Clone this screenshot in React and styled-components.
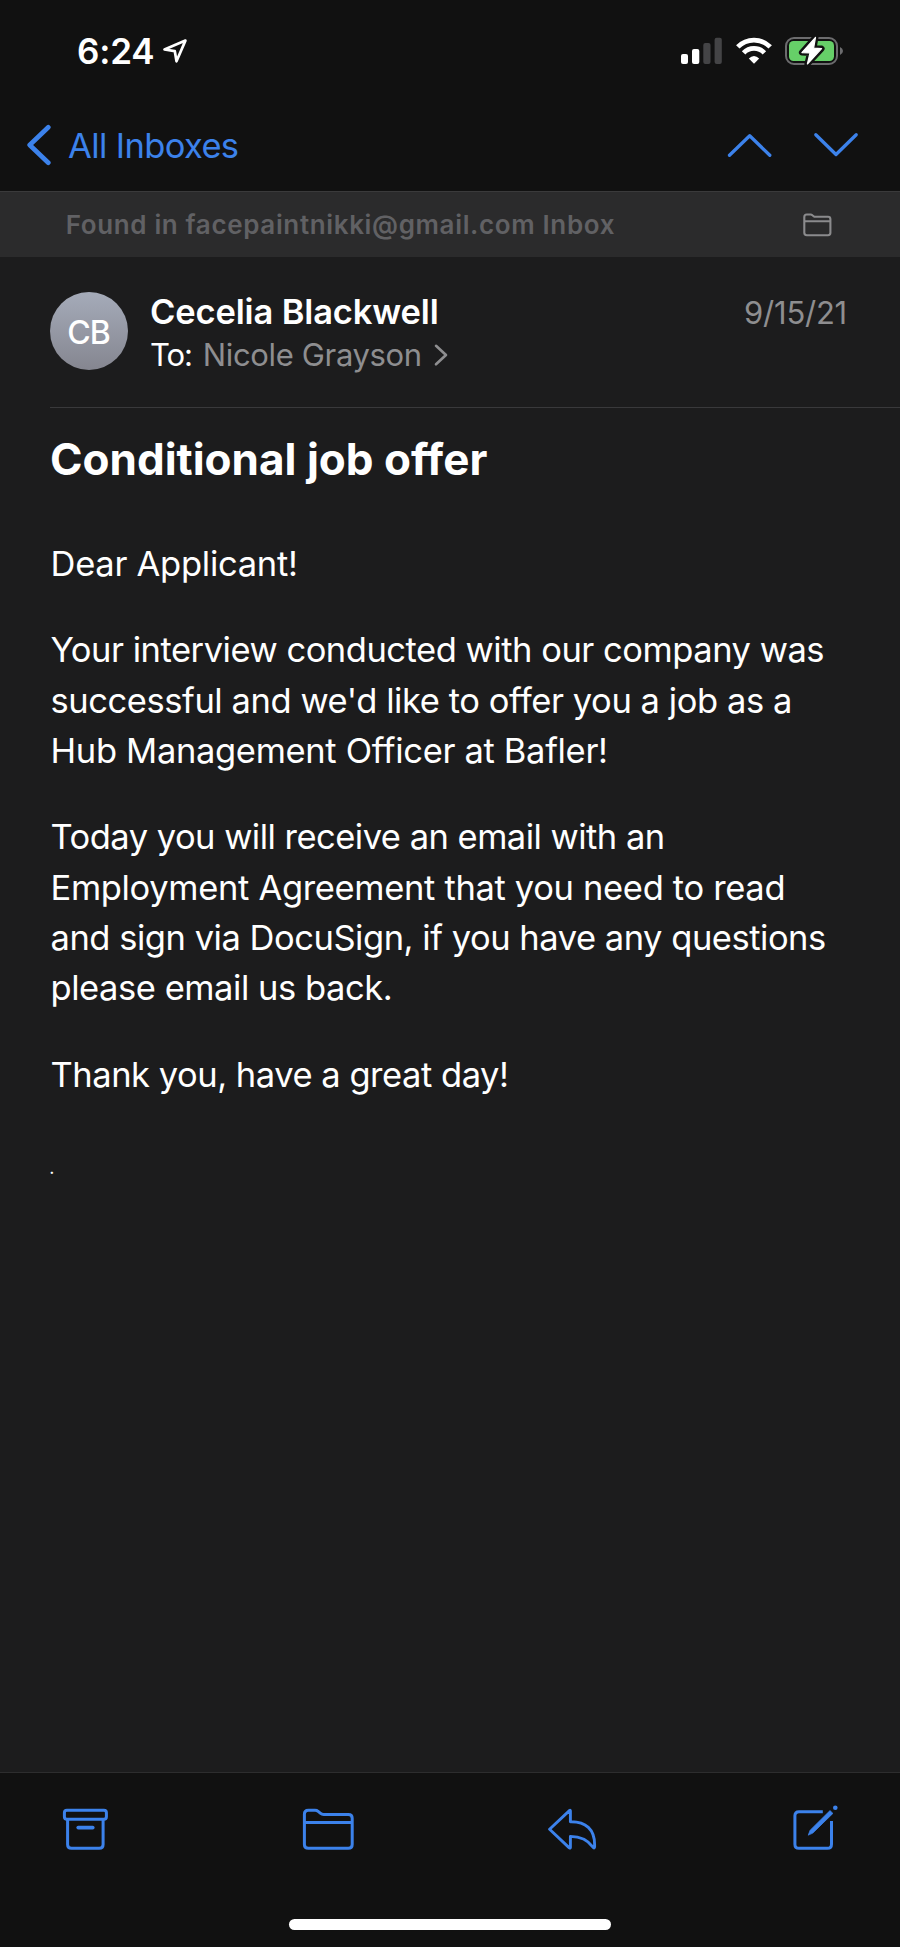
import React from "react";
import styled, { createGlobalStyle } from "styled-components";

const BLUE = "#3c82eb";
const CHROME = "#111111";

const GlobalStyle = createGlobalStyle`
  *, *::before, *::after { box-sizing: border-box; }
  body {
    margin: 0;
    background: ${CHROME};
    color: #fff;
    font-family: Inter, "Liberation Sans", sans-serif;
  }
  h1, p { margin: 0; }
`;

const Screen = styled.div`
  display: flex;
  flex-direction: column;
  width: 900px;
  height: 1947px;
  background: #1c1c1d;
  overflow: hidden;
`;

const Icon = styled.svg`
  display: block;
  flex: none;
  fill: none;
  stroke: currentColor;
  stroke-width: ${(p) => p.$weight || 3};
  stroke-linecap: round;
  stroke-linejoin: round;
`;

/* Status bar */
const StatusBar = styled.header`
  display: flex;
  align-items: center;
  height: 102px;
  padding: 0 55px 0 77px;
  background: ${CHROME};
`;

const Clock = styled.span`
  font-size: 35px;
  font-weight: 600;
  line-height: 42px;
  letter-spacing: -0.2px;
  margin-right: 7.7px;
`;

const StatusIcons = styled.div`
  display: flex;
  align-items: center;
  gap: 13px;
  margin-left: auto;
`;

/* Navigation */
const NavBar = styled.nav`
  display: flex;
  align-items: center;
  justify-content: space-between;
  height: 89px;
  padding: 0 41px 3px 25px;
  background: ${CHROME};
  color: ${BLUE};
`;

const PlainButton = styled.button`
  display: flex;
  align-items: center;
  padding: 0;
  border: 0;
  background: none;
  color: inherit;
  font: inherit;
`;

const BackButton = styled(PlainButton)`
  gap: 16px;
  font-size: 34.5px;
  line-height: 42px;
  letter-spacing: -0.62px;
`;

const BackLabel = styled.span`
  padding-top: 1px;
`;

const MessageArrows = styled.div`
  display: flex;
  gap: 40px;
`;

const FoundBanner = styled.div`
  display: flex;
  align-items: center;
  justify-content: space-between;
  height: 66px;
  padding: 0 67px 0 65.7px;
  border-top: 1px solid #3a3a3b;
  background: #2b2b2c;
  color: #8b8b8d;
`;

const FoundText = styled.span`
  color: #616164;
  font-size: 26px;
  font-weight: 600;
  line-height: 32px;
  letter-spacing: 0.64px;
`;

/* Message */
const Message = styled.main`
  flex: 1;
  padding-left: 50px;
`;

const SenderHeader = styled.section`
  display: flex;
  align-items: flex-start;
  height: 151px;
  padding: 32px 53px 0 0;
  border-bottom: 1px solid #39393b;
`;

const Avatar = styled.div`
  display: flex;
  align-items: center;
  justify-content: center;
  width: 78px;
  height: 78px;
  margin: 3px 22px 0 0;
  padding: 2px 1px 0 0;
  border-radius: 50%;
  background: linear-gradient(#a5abb9, #858690);
  font-size: 32px;
  font-weight: 500;
  letter-spacing: -1px;
`;

const SenderName = styled.div`
  padding-top: 1px;
  font-size: 34.5px;
  font-weight: 600;
  line-height: 43px;
  letter-spacing: -0.15px;
`;

const Recipient = styled.div`
  display: flex;
  align-items: center;
  color: #8e8e90;
  font-size: 31px;
  line-height: 43px;
  letter-spacing: -0.35px;
`;

const ToLabel = styled.span`
  margin-right: 11px;
  color: #fff;
  letter-spacing: -1.1px;
`;

const RecipientName = styled.span`
  margin-right: 11.5px;
`;

const MessageDate = styled.time`
  margin-left: auto;
  color: #8e8e90;
  font-size: 31px;
  line-height: 48px;
  letter-spacing: -0.23px;
`;

const Subject = styled.h1`
  padding-top: 24px;
  font-size: 44px;
  font-weight: 700;
  line-height: 54px;
`;

const Body = styled.article`
  display: flex;
  flex-direction: column;
  gap: 36px;
  padding-top: 53px;
  padding-left: 0.5px;
  font-size: 34.5px;
  line-height: 50.33px;
  white-space: nowrap;
`;

const Line = styled.span`
  display: block;
  letter-spacing: ${(p) => p.$tracking}px;
`;

const Footnote = styled.p`
  padding-top: 22px;
  margin-left: -1.3px;
  font-size: 18px;
  line-height: 20px;
`;

/* Bottom toolbar */
const Toolbar = styled.footer`
  display: flex;
  flex-direction: column;
  justify-content: space-between;
  align-items: center;
  height: 175px;
  padding-bottom: 17px;
  border-top: 1px solid #2d2d2e;
  background: ${CHROME};
  color: ${BLUE};
`;

const Actions = styled.div`
  display: flex;
  justify-content: space-between;
  width: 100%;
  padding: 31px 61px 0 62px;
`;

const HomeIndicator = styled.div`
  width: 322px;
  height: 11px;
  border-radius: 6px;
  background: #fff;
`;

const PARAGRAPHS = [
  [["Dear Applicant!", -0.27]],
  [
    ["Your interview conducted with our company was", -0.475],
    ["successful and we'd like to offer you a job as a", -0.43],
    ["Hub Management Officer at Bafler!", -0.33],
  ],
  [
    ["Today you will receive an email with an", -0.52],
    ["Employment Agreement that you need to read", -0.33],
    ["and sign via DocuSign, if you have any questions", -0.47],
    ["please email us back.", -0.45],
  ],
  [["Thank you, have a great day!", -0.47]],
];

const LocationIcon = () => (
  <Icon width="26" height="26" viewBox="162 38 26 26" $weight={2.7}>
    <path d="M185.4 40.6 L164.5 49.5 L174.8 51.2 L176.5 61.3 Z" />
  </Icon>
);

const SignalIcon = () => (
  <Icon width="42" height="28" viewBox="682 37 42 28">
    <g stroke="none">
      <rect x="682" y="54" width="7" height="10" rx="2" fill="#fff" />
      <rect x="693" y="49" width="7.3" height="15" rx="2" fill="#fff" />
      <rect x="704.3" y="43" width="7.2" height="21" rx="2" fill="#444446" />
      <rect x="715.6" y="37.8" width="7.2" height="26.2" rx="2" fill="#444446" />
    </g>
  </Icon>
);

const WifiIcon = () => (
  <Icon width="36" height="28" viewBox="736 37 36 28">
    <g strokeWidth="4.8" strokeLinecap="butt">
      <path d="M737.8 46.9 A22.6 22.6 0 0 1 770.2 46.9" />
      <path d="M743.6 52.8 A14.4 14.4 0 0 1 764.4 52.8" />
    </g>
    <path d="M748.8 58.6 Q754 53.6 759.2 58.6 L754 63.8 Z" fill="#fff" stroke="none" />
  </Icon>
);

const BatteryIcon = () => (
  <Icon width="60" height="30" viewBox="785 36 60 30">
    <rect x="786" y="38" width="51" height="26" rx="8" stroke="#6c6c6e" strokeWidth="2" />
    <rect x="789" y="41" width="45" height="20" rx="4.5" fill="#66cf68" stroke="none" />
    <path d="M840 47 Q843 48.3 843 51 Q843 53.7 840 55 Z" fill="#6c6c6e" stroke="none" />
    <path
      d="M815.5 37.3 L801.9 52.6 L810 53 L807.4 64 L821.6 48.6 L813.6 48.2 Z"
      fill={CHROME}
      stroke={CHROME}
      strokeWidth="6"
    />
    <path
      d="M815.5 37.3 L801.9 52.6 L810 53 L807.4 64 L821.6 48.6 L813.6 48.2 Z"
      fill="#fff"
      stroke="#fff"
      strokeWidth="1.2"
    />
  </Icon>
);

const BackIcon = () => (
  <Icon width="27" height="42" viewBox="25 124 27 42" $weight={4.7}>
    <path d="M48.3 127.3 L29.7 145 L48.3 162.7" />
  </Icon>
);

const UpIcon = () => (
  <Icon width="46" height="26" viewBox="727 132 46 26" $weight={3.3}>
    <path d="M729.5 155.3 L749.7 135.8 L769.8 155.3" />
  </Icon>
);

const DownIcon = () => (
  <Icon width="46" height="26" viewBox="813 132 46 26" $weight={3.3}>
    <path d="M815.8 134.7 L836 154.5 L856.2 134.7" />
  </Icon>
);

const SmallFolderIcon = () => (
  <Icon width="30" height="26" viewBox="803 211 30 26" $weight={2.1}>
    <path d="M804.3 220.2 V216 Q804.3 213.5 806.8 213.5 H810.6 Q811.6 213.5 812.4 214.2 L813.6 215.2 Q814.3 215.8 815.4 215.8 H828 Q830.4 215.8 830.4 218.2 V231.8 Q830.4 234.2 828 234.2 H806.8 Q804.3 234.2 804.3 231.8 Z M804.3 220.2 H830.4" />
  </Icon>
);

const ChevronIcon = () => (
  <Icon width="16" height="24" viewBox="433 343.5 16 24" $weight={2.6}>
    <path d="M436 346.3 L446 355.5 L436 364.8" />
  </Icon>
);

const ArchiveIcon = () => (
  <Icon width="47" height="48" viewBox="62 1804 47 48" $weight={3}>
    <rect x="64.4" y="1810.2" width="42" height="9" rx="2.5" />
    <path d="M67.6 1820 V1844.5 Q67.6 1848.3 71.4 1848.3 H99.3 Q103.1 1848.3 103.1 1844.5 V1820" />
    <path d="M78.3 1827.6 H92.7" strokeWidth="3.8" />
  </Icon>
);

const FolderIcon = () => (
  <Icon width="53" height="48" viewBox="302 1804 53 48" $weight={3}>
    <path d="M304.4 1822.6 V1814.2 Q304.4 1810.2 308.4 1810.2 H315 Q316.8 1810.2 318.1 1811.3 L320.6 1813.4 Q321.8 1814.4 323.6 1814.4 H348.3 Q352.2 1814.4 352.2 1818.3 V1844.4 Q352.2 1848.3 348.3 1848.3 H308.4 Q304.4 1848.3 304.4 1844.4 Z M304.4 1822.6 H352.2" />
  </Icon>
);

const ReplyIcon = () => (
  <Icon width="50" height="48" viewBox="548 1804 50 48" $weight={2.9}>
    <path d="M549.6 1829.2 L569.7 1810.4 Q570.4 1809.9 570.4 1811 V1821.7 C586 1821.4 594.6 1829.5 594.6 1844.5 V1847 Q594.2 1849 593 1847.2 C587.5 1839.5 581 1836.4 570.4 1836.4 V1847.4 Q570.3 1848.6 569.3 1847.9 Z" />
  </Icon>
);

const ComposeIcon = () => (
  <Icon width="48" height="48" viewBox="791 1804 48 48" $weight={3}>
    <path d="M822.8 1811.7 H799 Q794.9 1811.7 794.9 1815.8 V1844.2 Q794.9 1848.3 799 1848.3 H827.4 Q831.5 1848.3 831.5 1844.2 V1821" strokeLinecap="butt" />
    <path d="M808.4 1834.8 L810.2 1830.2 L830 1810.6 L832.9 1813.4 L812.9 1832.9 Z" fill={BLUE} stroke={BLUE} strokeWidth="0.8" />
    <circle cx="835.3" cy="1807.8" r="2.3" fill={BLUE} stroke="none" />
  </Icon>
);

export default function App() {
  return (
    <>
      <GlobalStyle />
      <Screen>
        <StatusBar>
          <Clock>6:24</Clock>
          <LocationIcon />
          <StatusIcons>
            <SignalIcon />
            <WifiIcon />
            <BatteryIcon />
          </StatusIcons>
        </StatusBar>

        <NavBar>
          <BackButton>
            <BackIcon />
            <BackLabel>All Inboxes</BackLabel>
          </BackButton>
          <MessageArrows>
            <PlainButton aria-label="Previous message"><UpIcon /></PlainButton>
            <PlainButton aria-label="Next message"><DownIcon /></PlainButton>
          </MessageArrows>
        </NavBar>

        <FoundBanner>
          <FoundText>Found in facepaintnikki@gmail.com Inbox</FoundText>
          <SmallFolderIcon />
        </FoundBanner>

        <Message>
          <SenderHeader>
            <Avatar>CB</Avatar>
            <div>
              <SenderName>Cecelia Blackwell</SenderName>
              <Recipient>
                <ToLabel>To:</ToLabel>
                <RecipientName>Nicole Grayson</RecipientName>
                <ChevronIcon />
              </Recipient>
            </div>
            <MessageDate>9/15/21</MessageDate>
          </SenderHeader>

          <Subject>Conditional job offer</Subject>

          <Body>
            {PARAGRAPHS.map((lines) => (
              <p key={lines[0][0]}>
                {lines.map(([text, tracking]) => (
                  <Line key={text} $tracking={tracking}>{text}</Line>
                ))}
              </p>
            ))}
            <Footnote>.</Footnote>
          </Body>
        </Message>

        <Toolbar>
          <Actions>
            <PlainButton aria-label="Archive"><ArchiveIcon /></PlainButton>
            <PlainButton aria-label="Move to folder"><FolderIcon /></PlainButton>
            <PlainButton aria-label="Reply"><ReplyIcon /></PlainButton>
            <PlainButton aria-label="Compose"><ComposeIcon /></PlainButton>
          </Actions>
          <HomeIndicator />
        </Toolbar>
      </Screen>
    </>
  );
}
